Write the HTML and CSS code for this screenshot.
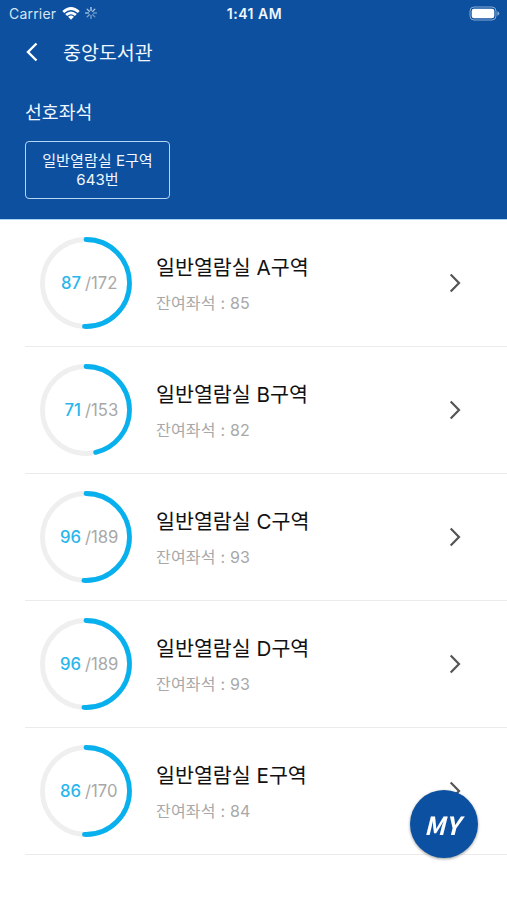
FILE: index.html
```html
<!DOCTYPE html>
<html lang="ko">
<head>
    <meta charset="UTF-8">
    <meta name="viewport" content="width=device-width, initial-scale=1">
    <title>중앙도서관</title>
    <link rel="stylesheet" href="styles.css">
</head>
<body>
    <header class="header">
        <div class="status-bar">
            <div class="status-left">
                <span>Carrier</span>
                <svg class="wifi" viewBox="0 0 18 14" width="18" height="14">
                    <path d="M0.3 5.1 Q9 -3.1 17.7 5.1 L15.8 7 Q9 0.8 2.2 7 Z"/>
                    <path d="M3.2 8 Q9 2.8 14.8 8 L12.9 9.9 Q9 6.4 5.1 9.9 Z"/>
                    <path d="M6.1 10.8 Q9 8.3 11.9 10.8 L9 13.7 Z"/>
                </svg>
                <svg class="spinner" viewBox="0 0 12 12" width="12" height="12">
                    <path d="M6 0.5V3.6" opacity="0.9"/>
                    <path d="M9.9 2.1L7.7 4.3" opacity="0.8"/>
                    <path d="M11.5 6H8.4" opacity="0.45"/>
                    <path d="M9.9 9.9L7.7 7.7" opacity="0.5"/>
                    <path d="M6 11.5V8.4" opacity="0.55"/>
                    <path d="M2.1 9.9L4.3 7.7" opacity="0.6"/>
                    <path d="M0.5 6H3.6" opacity="0.7"/>
                    <path d="M2.1 2.1L4.3 4.3" opacity="0.8"/>
                </svg>
            </div>
            <div class="status-time">1:41 AM</div>
            <div class="status-right">
                <svg viewBox="0 0 31 15" width="31" height="15">
                    <rect class="battery-case" x="1" y="1" width="26" height="13" rx="4"/>
                    <rect class="battery-level" x="2.7" y="2.7" width="22.6" height="9.6" rx="2.4"/>
                    <path class="battery-tip" d="M28.3 5.2Q30.4 6 30.4 7.5T28.3 9.8Z"/>
                </svg>
            </div>
        </div>
        <div class="nav-bar">
            <svg class="back" viewBox="0 0 12 20" width="12" height="20">
                <path d="M10.5 1.5L2 10L10.5 18.5"/>
            </svg>
            <h1 class="nav-title">중앙도서관</h1>
        </div>
        <h2 class="favorite-title">선호좌석</h2>
        <button class="favorite-seat">일반열람실 E구역<br>643번</button>
    </header>

    <ul class="room-list">
        <li class="room">
            <div class="ring">
                <svg viewBox="0 0 92 92" width="92" height="92">
                    <circle class="ring-track" cx="46" cy="46" r="43.5"/>
                    <circle class="ring-value" cx="46" cy="46" r="43.5" pathLength="172" stroke-dasharray="87 172"/>
                </svg>
                <div class="ring-text"><b>87</b><span>/172</span></div>
            </div>
            <div class="room-info">
                <div class="room-name">일반열람실 A구역</div>
                <div class="room-left">잔여좌석 : 85</div>
            </div>
            <svg class="arrow" viewBox="0 0 12 20" width="12" height="20"><path d="M1.7 1.5L10 10L1.7 18.5"/></svg>
        </li>
        <li class="room">
            <div class="ring">
                <svg viewBox="0 0 92 92" width="92" height="92">
                    <circle class="ring-track" cx="46" cy="46" r="43.5"/>
                    <circle class="ring-value" cx="46" cy="46" r="43.5" pathLength="153" stroke-dasharray="71 153"/>
                </svg>
                <div class="ring-text"><b>71</b><span>/153</span></div>
            </div>
            <div class="room-info">
                <div class="room-name">일반열람실 B구역</div>
                <div class="room-left">잔여좌석 : 82</div>
            </div>
            <svg class="arrow" viewBox="0 0 12 20" width="12" height="20"><path d="M1.7 1.5L10 10L1.7 18.5"/></svg>
        </li>
        <li class="room">
            <div class="ring">
                <svg viewBox="0 0 92 92" width="92" height="92">
                    <circle class="ring-track" cx="46" cy="46" r="43.5"/>
                    <circle class="ring-value" cx="46" cy="46" r="43.5" pathLength="189" stroke-dasharray="96 189"/>
                </svg>
                <div class="ring-text"><b>96</b><span>/189</span></div>
            </div>
            <div class="room-info">
                <div class="room-name">일반열람실 C구역</div>
                <div class="room-left">잔여좌석 : 93</div>
            </div>
            <svg class="arrow" viewBox="0 0 12 20" width="12" height="20"><path d="M1.7 1.5L10 10L1.7 18.5"/></svg>
        </li>
        <li class="room">
            <div class="ring">
                <svg viewBox="0 0 92 92" width="92" height="92">
                    <circle class="ring-track" cx="46" cy="46" r="43.5"/>
                    <circle class="ring-value" cx="46" cy="46" r="43.5" pathLength="189" stroke-dasharray="96 189"/>
                </svg>
                <div class="ring-text"><b>96</b><span>/189</span></div>
            </div>
            <div class="room-info">
                <div class="room-name">일반열람실 D구역</div>
                <div class="room-left">잔여좌석 : 93</div>
            </div>
            <svg class="arrow" viewBox="0 0 12 20" width="12" height="20"><path d="M1.7 1.5L10 10L1.7 18.5"/></svg>
        </li>
        <li class="room">
            <div class="ring">
                <svg viewBox="0 0 92 92" width="92" height="92">
                    <circle class="ring-track" cx="46" cy="46" r="43.5"/>
                    <circle class="ring-value" cx="46" cy="46" r="43.5" pathLength="170" stroke-dasharray="86 170"/>
                </svg>
                <div class="ring-text"><b>86</b><span>/170</span></div>
            </div>
            <div class="room-info">
                <div class="room-name">일반열람실 E구역</div>
                <div class="room-left">잔여좌석 : 84</div>
            </div>
            <svg class="arrow" viewBox="0 0 12 20" width="12" height="20"><path d="M1.7 1.5L10 10L1.7 18.5"/></svg>
        </li>
    </ul>

    <button class="my-btn">MY</button>
</body>
</html>
```
FILE: styles.css
```css
* {
    box-sizing: border-box;
}
body {
    margin: 0;
    height: 100vh;
    overflow: hidden;
    background: #fff;
    font-family: Inter, "Noto Sans CJK KR", sans-serif;
}
h1, h2, ul {
    margin: 0;
    padding: 0;
    font-weight: normal;
}
button {
    margin: 0;
    padding: 0;
    font-family: inherit;
    cursor: pointer;
}

/* 상단 */
.header {
    height: 220px;
    background: #0c509f;
    border-bottom: 1px solid #a9d3f5;
    color: #f0f7ff;
}
.status-bar {
    display: grid;
    grid-template-columns: 1fr auto 1fr;
    align-items: center;
    height: 27px;
    padding: 0 7px 0 9px;
    font-size: 14px;
}
.status-left {
    display: flex;
    align-items: center;
    gap: 6px;
    letter-spacing: 0.2px;
    color: #d5e4f4;
}
.wifi {
    margin-top: -2px;
    fill: #fff;
}
.spinner {
    margin: -2px 0 0 -1px;
    fill: none;
    stroke: #d5e4f4;
    stroke-width: 1.3;
    stroke-linecap: round;
}
.status-time {
    font-weight: 600;
    font-size: 14px;
    letter-spacing: 0.5px;
}
.status-right {
    display: flex;
    justify-content: flex-end;
}
.battery-case {
    fill: none;
    stroke: #86a9d2;
    stroke-width: 1;
}
.battery-level {
    fill: #fff;
}
.battery-tip {
    fill: #86a9d2;
}
.nav-bar {
    display: flex;
    align-items: center;
    gap: 25px;
    height: 50px;
    padding-left: 26px;
}
.back {
    fill: none;
    stroke: #fff;
    stroke-width: 2.4;
}
.nav-title {
    margin-top: 1px;
    font-size: 19.5px;
    line-height: 28px;
}
.favorite-title {
    margin: 21px 0 15px 25px;
    font-size: 18.3px;
    line-height: 28px;
}
.favorite-seat {
    display: block;
    width: 145px;
    height: 58px;
    margin-left: 25px;
    border: 1.5px solid #b5d6f5;
    border-radius: 4px;
    background: none;
    color: #f0f7ff;
    font-size: 15.1px;
    line-height: 19px;
}

/* 열람실 목록 */
.room-list {
    list-style: none;
    padding-left: 25px;
}
.room {
    display: flex;
    align-items: center;
    height: 127px;
    padding: 0 46px 0 15px;
    border-bottom: 1.5px solid #ebebeb;
}
.ring {
    display: grid;
    align-items: center;
    width: 92px;
    height: 92px;
}
.ring svg, .ring-text {
    grid-area: 1 / 1;
}
.ring circle {
    fill: none;
    stroke-width: 4.8;
}
.ring .ring-track {
    stroke: #efefef;
}
.ring .ring-value {
    stroke: #08b1ee;
    stroke-linecap: round;
    transform: rotate(-90deg);
    transform-origin: center;
}
.ring-text {
    display: grid;
    grid-template-columns: 41px auto;
    column-gap: 4px;
    font-size: 16.7px;
    color: #a8a8a8;
}
.ring-text b {
    text-align: right;
    font-weight: 450;
    color: #29b6ec;
}
.room-info {
    flex: 1;
    margin: 1px 0 0 24px;
}
.room-name {
    font-size: 20.6px;
    line-height: 30px;
    color: #111;
}
.room-left {
    margin-top: 8px;
    font-size: 16px;
    line-height: 24px;
    letter-spacing: 0.2px;
    color: #a8a8a8;
}
.arrow {
    fill: none;
    stroke: #555;
    stroke-width: 2.2;
}

/* MY 버튼 */
.my-btn {
    position: fixed;
    right: 29px;
    bottom: 42px;
    width: 68px;
    height: 68px;
    padding-right: 4px;
    border: none;
    border-radius: 50%;
    background: #0c50a1;
    box-shadow: 0 1px 3px rgba(0, 0, 0, 0.4);
    color: #fff;
    font-family: "Noto Sans CJK KR", sans-serif;
    font-size: 25px;
    font-style: italic;
    font-weight: bold;
}
```
